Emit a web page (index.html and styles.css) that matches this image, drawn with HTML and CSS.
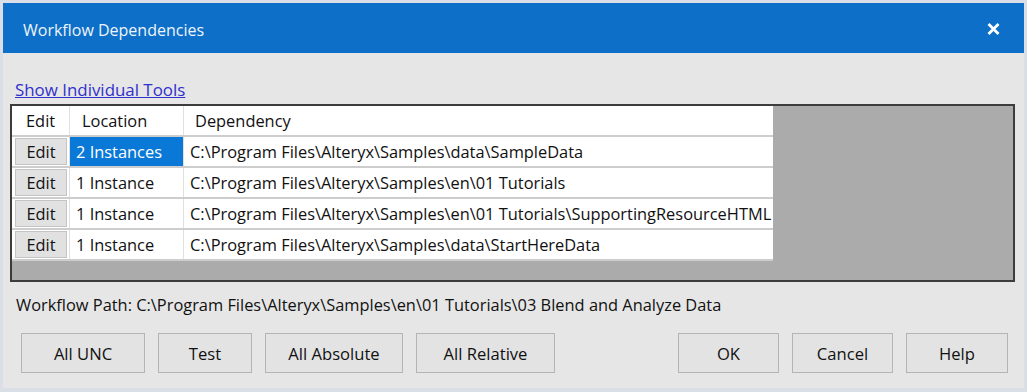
FILE: index.html
```html
<!DOCTYPE html>
<html>
<head>
<meta charset="utf-8">
<link rel="stylesheet" href="styles.css">
</head>
<body>
<div class="window">
  <div class="titlebar">
    <span class="title">Workflow Dependencies</span>
    <svg class="close" width="13" height="12" viewBox="0 0 13 12"><path d="M1.5 1 L11.5 11 M11.5 1 L1.5 11" stroke="#fff" stroke-width="2.8" stroke-linecap="butt"/></svg>
  </div>
  <div class="content">
    <a class="link" href="#">Show Individual Tools</a>
    <div class="frame">
      <div class="grid">
        <div class="row head">
          <div class="c c-edit hc">Edit</div>
          <div class="c c-loc hc">Location</div>
          <div class="c c-dep hc">Dependency</div>
        </div>
        <div class="row">
          <div class="c c-edit"><span class="editbtn">Edit</span></div>
          <div class="c c-loc sel">2 Instances</div>
          <div class="c c-dep">C:\Program Files\Alteryx\Samples\data\SampleData</div>
        </div>
        <div class="row">
          <div class="c c-edit"><span class="editbtn">Edit</span></div>
          <div class="c c-loc">1 Instance</div>
          <div class="c c-dep">C:\Program Files\Alteryx\Samples\en\01 Tutorials</div>
        </div>
        <div class="row">
          <div class="c c-edit"><span class="editbtn">Edit</span></div>
          <div class="c c-loc">1 Instance</div>
          <div class="c c-dep">C:\Program Files\Alteryx\Samples\en\01 Tutorials\SupportingResourceHTML</div>
        </div>
        <div class="row">
          <div class="c c-edit"><span class="editbtn">Edit</span></div>
          <div class="c c-loc">1 Instance</div>
          <div class="c c-dep">C:\Program Files\Alteryx\Samples\data\StartHereData</div>
        </div>
      </div>
    </div>
    <div class="path">Workflow Path: C:\Program Files\Alteryx\Samples\en\01 Tutorials\03 Blend and Analyze Data</div>
    <div class="buttons">
      <div class="group">
        <button class="btn w-unc">All UNC</button>
        <button class="btn w-test">Test</button>
        <button class="btn w-abs">All Absolute</button>
        <button class="btn w-rel">All Relative</button>
      </div>
      <div class="group">
        <button class="btn w-ok">OK</button>
        <button class="btn w-ok">Cancel</button>
        <button class="btn w-help">Help</button>
      </div>
    </div>
  </div>
</div>
</body>
</html>
```
FILE: styles.css
```css
* { box-sizing: border-box; }
html, body { margin: 0; padding: 0; }
body {
  width: 1027px;
  height: 392px;
  overflow: hidden;
  font-family: "Open Sans", "Noto Sans", sans-serif;
  font-size: 16.4px;
  color: #111;
  background: #dde2ea;
}
.window {
  width: 1027px;
  height: 392px;
  border: 3px solid #d9dee7;
  border-bottom-width: 4px;
  background: #e6e6e6;
  display: flex;
  flex-direction: column;
}
.titlebar {
  height: 50px;
  flex: none;
  background: #0d6fc7;
  color: #fff;
  display: flex;
  align-items: center;
  justify-content: space-between;
  padding: 0 24px 0 20px;
}
.title {
  font-size: 16px;
  color: #eef4fb;
  margin-top: 3px;
}
.close { margin-top: 1px; }
.content {
  flex: 1;
  display: flex;
  flex-direction: column;
  padding: 0 9px 0 7px;
}
.link {
  align-self: flex-start;
  margin: 28px 0 0 5px;
  line-height: 18px;
  color: #3030cc;
  text-decoration: underline;
  font-size: 16.9px;
}
.frame {
  margin-top: 5px;
  height: 178px;
  border: 2px solid #3c3c3c;
  background: #ababab;
  flex: none;
}
.grid {
  width: 761px;
  display: flex;
  flex-direction: column;
}
.row {
  display: flex;
  height: 31px;
  border-bottom: 2px solid #cdcdcd;
  background: #fff;
}
.c {
  display: flex;
  align-items: center;
  border-right: 1px solid #e0e0e0;
  white-space: nowrap;
  line-height: 18px;
  padding-top: 1px;
}
.c-edit { width: 58px; padding-left: 3px; padding-top: 0; }
.c-loc { width: 114px; padding-left: 6px; }
.c-dep { width: 589px; padding-left: 6px; border-right: none; }
.hc.c-edit { padding-left: 14px; padding-top: 1px; }
.hc.c-loc { padding-left: 12px; }
.hc.c-dep { padding-left: 11px; }
.sel {
  background: #0a78d6;
  color: #fff;
}
.editbtn {
  width: 52px;
  height: 27px;
  border: 1px solid #c4c4c4;
  background: #e1e1e1;
  display: flex;
  align-items: center;
  justify-content: center;
}
.path {
  margin: 14px 0 0 6px;
  line-height: 18px;
  font-size: 16.4px;
}
.buttons {
  margin-top: 19px;
  display: flex;
  justify-content: space-between;
  padding: 0 7px 0 11px;
}
.group { display: flex; gap: 13px; }
.btn {
  height: 40px;
  font-family: "Open Sans", "Noto Sans", sans-serif;
  font-size: 16.6px;
  color: #111;
  background: #e3e3e3;
  border: 1px solid #b4b4b4;
  padding: 0;
}
.w-unc { width: 124px; }
.w-test { width: 94px; }
.w-abs { width: 138px; }
.w-rel { width: 139px; }
.w-ok { width: 101px; }
.w-help { width: 102px; }
```
